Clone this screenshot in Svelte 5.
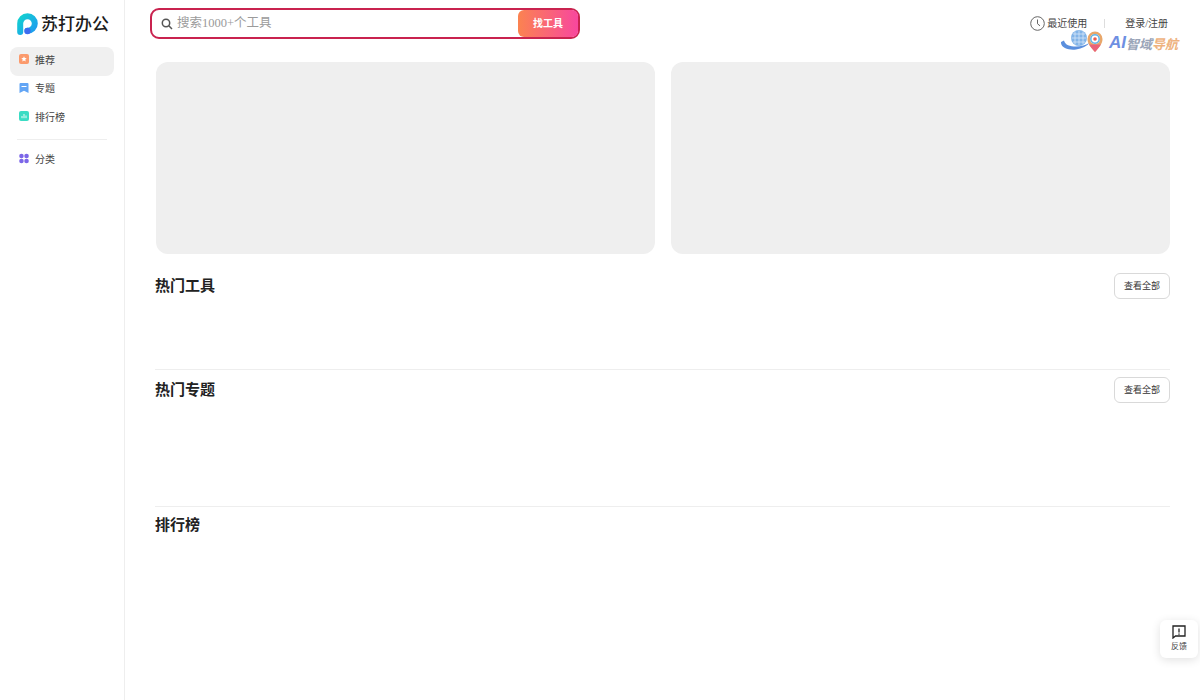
<script>
  const nav = [
    { label: '推荐', icon: 'star', active: true },
    { label: '专题', icon: 'mark' },
    { label: '排行榜', icon: 'chart' }
  ];
</script>

<div class="page">
  <aside class="side">
    <div class="logo">
      <svg width="21" height="22" viewBox="0 0 21 22">
        <defs>
          <linearGradient id="lg" x1="0" y1="0" x2="1" y2="1">
            <stop offset="0" stop-color="#12d0d0" />
            <stop offset="1" stop-color="#1f9bf0" />
          </linearGradient>
        </defs>
        <path d="M3.200 19V10.500A7.300 7.300 0 1 1 10.500 17.800" fill="none" stroke="url(#lg)" stroke-width="6" stroke-linecap="round" />
        <circle cx="10.500" cy="18" r="3.200" fill="#3d6cf0" />
      </svg>
      <span>苏打办公</span>
    </div>
    <nav class="nav">
      {#each nav as item}
        <div class="item" class:active={item.active}>
          <svg class="ico" width="10" height="10" viewBox="0 0 10 10">
            {#if item.icon === 'star'}
              <rect width="10" height="10" rx="2" fill="#fb9a6c" />
              <path d="M5 2.300l.8 1.800 1.900.2-1.400 1.300.4 1.900L5 6.600l-1.700.9.400-1.900L2.300 4.300l1.900-.2z" fill="#fff" />
            {:else if item.icon === 'mark'}
              <path d="M.5 1a1 1 0 0 1 1-1h7a1 1 0 0 1 1 1v9L5 7.800.5 10z" fill="#62a5f5" />
              <rect x="2.500" y="3" width="5" height="1" fill="#fff" />
            {:else}
              <rect width="10" height="10" rx="2" fill="#3bdcc4" />
              <path d="M3 5v2.200M5 3v4.200M7 4.500v2.700" stroke="#fff" stroke-width="0.900" />
            {/if}
          </svg>
          <span>{item.label}</span>
        </div>
      {/each}
      <div class="rule"></div>
      <div class="item">
        <svg class="ico" width="10" height="11" viewBox="0 0 11 11">
          <g fill="#7c66e8">
            <circle cx="2.700" cy="2.700" r="2.500" />
            <circle cx="8.300" cy="2.700" r="2.500" />
            <circle cx="2.700" cy="8.300" r="2.500" />
            <circle cx="8.300" cy="8.300" r="2.500" />
          </g>
        </svg>
        <span>分类</span>
      </div>
    </nav>
  </aside>

  <div class="main">
    <header class="top">
      <div class="search">
        <svg width="12" height="12" viewBox="0 0 12 12" fill="none" stroke="#555" stroke-width="1.500">
          <circle cx="5" cy="5" r="3.700" />
          <path d="M7.800 7.800L11 11" />
        </svg>
        <input placeholder="搜索1000+个工具" />
        <button class="go">找工具</button>
      </div>
      <div class="links">
        <svg width="15" height="15" viewBox="0 0 15 15" fill="none" stroke="#666" stroke-width="1">
          <circle cx="7.500" cy="7.500" r="6.800" />
          <path d="M7.500 3.500v4.300l2.500 2" />
        </svg>
        <span class="recent">最近使用</span>
        <i class="sep"></i>
        <span>登录/注册</span>
      </div>
    </header>

    <div class="brand">
      <svg width="46" height="22" viewBox="0 0 46 22">
        <path d="M0 12C-.5 18 8 20.500 15 19.500c6-.8 11-3.500 14-7-4 2.500-9 4-14 4-6 0-11-1.500-12-6z" fill="#5b8fdd" />
        <circle cx="18" cy="8" r="8" fill="#82b4e8" />
        <path d="M12 4h12M10.500 8h15M12 12h12M18 .5v15M14 1.500v13M22 1.500v13" stroke="#d6e6f7" stroke-width="0.800" />
        <path d="M34 22c-4.500-5-7.500-8.500-7.500-13a7.500 7.500 0 0 1 15 0c0 4.500-3 8-7.500 13z" fill="#e8a76a" />
        <path d="M34 22c-2.500-3-4.500-5-6-7.500h12c-1.500 2.500-3.500 4.500-6 7.500z" fill="#e9627a" />
        <circle cx="34" cy="9" r="5" fill="#fff" />
        <circle cx="34" cy="9" r="4.200" fill="none" stroke="#5fb2e6" stroke-width="1.500" />
        <circle cx="34" cy="9" r="1.800" fill="#ea5d4d" />
      </svg>
      <span class="brandtext"><b class="ai">AI</b><b class="zy">智域</b><b class="dh">导航</b></span>
    </div>

    <section class="banners">
      <div class="banner"></div>
      <div class="banner"></div>
    </section>

    <section class="block tools">
      <div class="head">
        <h2>热门工具</h2>
        <button class="all">查看全部</button>
      </div>
    </section>
    <section class="block topics">
      <div class="head">
        <h2>热门专题</h2>
        <button class="all">查看全部</button>
      </div>
    </section>
    <section class="block rank">
      <div class="head">
        <h2>排行榜</h2>
      </div>
    </section>
  </div>

  <div class="feedback">
    <svg width="14" height="14" viewBox="0 0 14 14" fill="none" stroke="#222" stroke-width="1.300">
      <path d="M1 1h12v10H3.500L1 13z" />
      <path d="M7 3.500v4M7 8.500v1.200" />
    </svg>
    <span>反馈</span>
  </div>
</div>

<style>
  :global(body) {
    margin: 0;
    background: #fff;
  }
  .page {
    display: flex;
    height: 700px;
    overflow: hidden;
    position: relative;
    font-family: "Noto Sans CJK SC", "Liberation Sans", sans-serif;
    color: #222;
  }
  .side {
    flex: none;
    border-right: 1px solid #eee;
    padding: 12px 10px 0;
    box-sizing: content-box;
    width: 104px;
  }
  .logo {
    display: flex;
    align-items: center;
    gap: 3px;
    height: 24px;
    padding-left: 7px;
  }
  .logo span {
    font-size: 17px;
    line-height: 24px;
    font-weight: 500;
    color: #1c1c1c;
    white-space: nowrap;
    padding-bottom: 2px;
  }
  .nav {
    margin-top: 11px;
  }
  .item {
    display: flex;
    align-items: center;
    gap: 6px;
    height: 28.500px;
    box-sizing: border-box;
    padding: 0 0 4px 9px;
    border-radius: 8px;
    font-size: 10px;
    color: #444;
  }
  .item.active {
    background: #f0f0f0;
  }
  .ico {
    flex: none;
  }
  .rule {
    height: 1px;
    background: #eee;
    margin: 6.500px 7px 5.750px;
  }
  .main {
    flex: 1;
    min-width: 0;
    position: relative;
    padding: 8px 30px 0 30px;
    box-sizing: border-box;
  }
  .top {
    display: flex;
    justify-content: space-between;
    align-items: center;
    height: 31px;
    margin-left: -5px;
  }
  .search {
    width: 430px;
    height: 31px;
    box-sizing: border-box;
    border: 2px solid #c9234f;
    border-radius: 9px;
    display: flex;
    align-items: center;
    padding: 0 0 0 9px;
  }
  .search input {
    flex: 1;
    min-width: 0;
    border: 0;
    outline: 0;
    background: none;
    margin-left: 4px;
    padding: 0;
    font-family: "Liberation Serif", "Noto Sans CJK SC", serif;
    font-size: 12.500px;
  }
  .search input::placeholder {
    color: #9b9b9b;
    opacity: 1;
  }
  .go {
    width: 60px;
    height: 27px;
    border: 0;
    padding: 0 0 3px;
    border-radius: 6px;
    background: linear-gradient(90deg, #fb8350, #f8479e);
    color: #fff;
    font-family: inherit;
    font-size: 10px;
    font-weight: 700;
  }
  .links {
    display: flex;
    align-items: center;
    font-family: "Liberation Serif", "Noto Sans CJK SC", serif;
    font-size: 10px;
    color: #444;
    margin-right: 2px;
    padding-bottom: 1px;
  }
  .links span {
    padding-bottom: 1px;
  }
  .recent {
    margin-left: 2px;
  }
  .sep {
    width: 1px;
    height: 9px;
    background: #ddd;
    margin: 0 20px 0 17px;
  }
  .brand {
    position: absolute;
    left: 936px;
    top: 30px;
    display: flex;
    align-items: center;
    height: 22px;
    white-space: nowrap;
  }
  .brandtext {
    font-size: 13px;
    display: flex;
    align-items: center;
    margin-left: 2px;
    padding-top: 4px;
  }
  .brand b {
    font-style: italic;
    font-weight: 700;
  }
  .ai {
    color: #6e8fe2;
    font-family: "Liberation Sans", sans-serif;
    font-size: 17px;
    margin-right: 0;
  }
  .zy {
    color: #9aa5b8;
  }
  .dh {
    color: #eeb27e;
  }
  .banners {
    display: flex;
    gap: 16px;
    margin: 23px 0 0 1px;
  }
  .banner {
    flex: 1;
    height: 192px;
    background: #efefef;
    border-radius: 12px;
  }
  .block {
    box-sizing: border-box;
  }
  .tools {
    height: 115px;
    padding-top: 19px;
  }
  .topics {
    height: 137px;
    padding-top: 7px;
    border-top: 1px solid #eee;
  }
  .rank {
    padding-top: 5px;
    border-top: 1px solid #eee;
  }
  .head {
    display: flex;
    justify-content: space-between;
    align-items: center;
    min-height: 26px;
  }
  h2 {
    margin: 0;
    padding-bottom: 2px;
    font-size: 15px;
    line-height: 24px;
    font-weight: 700;
    color: #222;
  }
  .all {
    width: 56px;
    height: 26px;
    padding: 0 0 2px;
    background: #fff;
    border: 1px solid #d9d9d9;
    border-radius: 6px;
    font-family: inherit;
    font-size: 9px;
    color: #333;
  }
  .feedback {
    position: absolute;
    left: 1160px;
    top: 620px;
    width: 38px;
    height: 38px;
    box-sizing: border-box;
    padding-bottom: 2px;
    background: #fff;
    border-radius: 6px;
    box-shadow: 0 2px 10px rgba(0, 0, 0, 0.12);
    display: flex;
    flex-direction: column;
    align-items: center;
    justify-content: center;
    gap: 1px;
    font-size: 8px;
    color: #444;
  }
</style>
